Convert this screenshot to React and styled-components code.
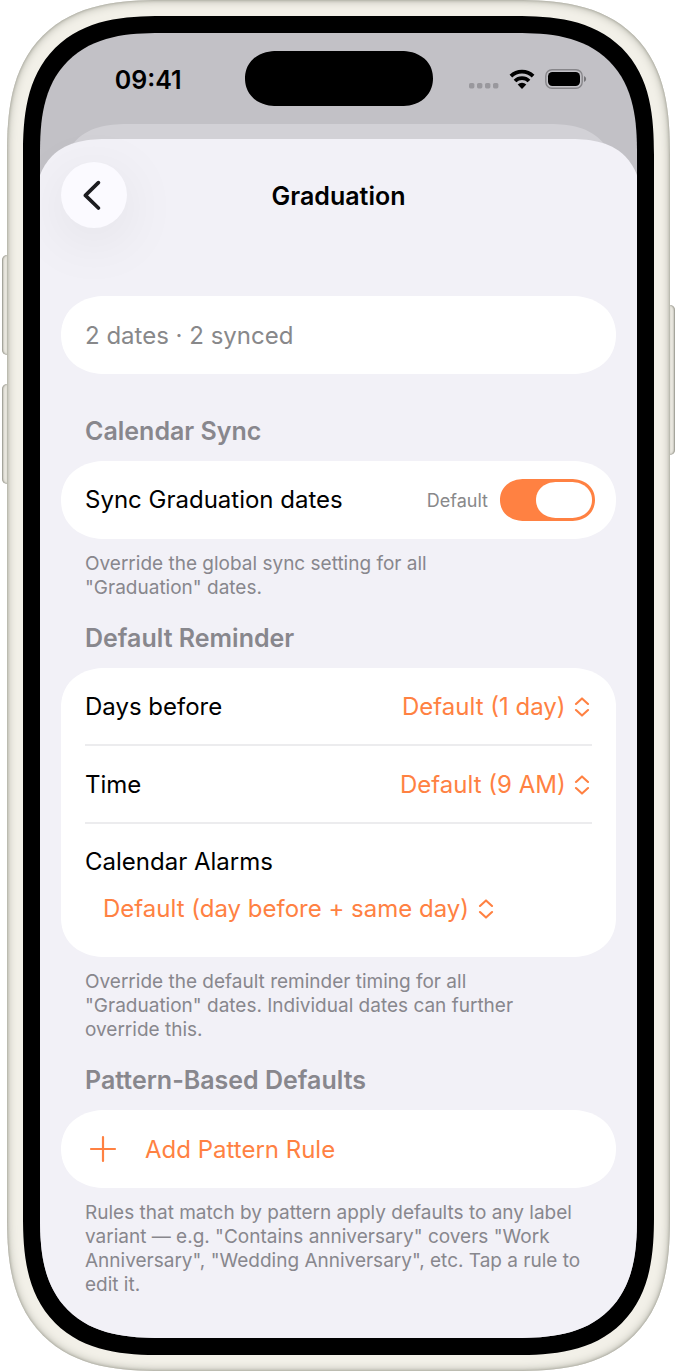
import { useState } from "react";
import styled, { createGlobalStyle } from "styled-components";

const StatusIcons = () => (
  <StatusRight>
    <svg width="30" height="20" viewBox="0 0 30 20" fill="#99989d">
      <rect x="0" y="14" width="5.4" height="5.4" rx="1.6" />
      <rect x="8" y="14" width="5.4" height="5.4" rx="1.6" />
      <rect x="16" y="14" width="5.4" height="5.4" rx="1.6" />
      <rect x="24" y="14" width="5.4" height="5.4" rx="1.6" />
    </svg>
    <svg width="26" height="20" viewBox="0 0 26 20" fill="none" stroke="#000">
      <path d="M1.9 7.2 A15.8 15.8 0 0 1 24.1 7.2" strokeWidth="3.8" />
      <path d="M6 12 A9.9 9.9 0 0 1 20 12" strokeWidth="3.8" />
      <path
        d="M13 20 L8.7 15.6 A6 6 0 0 1 17.3 15.6 Z"
        fill="#000"
        stroke="none"
      />
    </svg>
    <svg width="42" height="20" viewBox="0 0 42 20">
      <rect
        x="0.8"
        y="0.8"
        width="36.4"
        height="18.4"
        rx="6.2"
        fill="none"
        stroke="#87868a"
        strokeWidth="1.4"
      />
      <rect x="3" y="3" width="32" height="14" rx="4.4" fill="#000" />
      <path d="M39 7 Q41.2 8 41.2 10 Q41.2 12 39 13 Z" fill="#77767a" />
    </svg>
  </StatusRight>
);

const UpDown = () => (
  <svg
    width="16"
    height="20"
    viewBox="0 0 16 20"
    fill="none"
    stroke="currentColor"
    strokeWidth="2.1"
    strokeLinecap="round"
    strokeLinejoin="round"
    aria-hidden="true"
  >
    <path d="M2 7 L8 1.4 L14 7" />
    <path d="M2 13 L8 18.6 L14 13" />
  </svg>
);

const Picker = ({ id, options }) => (
  <PickerWrap>
    <Select id={id} defaultValue={options[0]}>
      {options.map((option) => (
        <option key={option}>{option}</option>
      ))}
    </Select>
    <UpDown />
  </PickerWrap>
);

const App = () => {
  const [synced, setSynced] = useState(true);

  return (
    <>
      <GlobalStyle />
      <Stage>
        <LeftButtons>
          <SideButton $side="left" />
          <SideButton $side="left" />
        </LeftButtons>
        <Frame>
          <Bezel>
            <Screen>
              <StatusBar>
                <Time>09:41</Time>
                <Island />
                <StatusIcons />
              </StatusBar>
              <BackSheet />
              <Sheet>
                <Header>
                  <BackButton aria-label="Back">
                    <svg
                      width="18"
                      height="30"
                      viewBox="0 0 18 30"
                      fill="none"
                      stroke="#1c1c20"
                      strokeWidth="3.6"
                      strokeLinecap="round"
                      strokeLinejoin="round"
                      aria-hidden="true"
                    >
                      <path d="M15.4 2.6 L2.4 15.4 L15.4 28" />
                    </svg>
                  </BackButton>
                  <Title>Graduation</Title>
                </Header>

                <Card>
                  <Row>
                    <Summary>2 dates · 2 synced</Summary>
                  </Row>
                </Card>

                <Heading $first>Calendar Sync</Heading>
                <Card>
                  <SwitchRow>
                    <Label htmlFor="sync">Sync Graduation dates</Label>
                    <SwitchSide>
                      <Hint>Default</Hint>
                      <Switch
                        id="sync"
                        type="checkbox"
                        checked={synced}
                        onChange={(e) => setSynced(e.target.checked)}
                      />
                    </SwitchSide>
                  </SwitchRow>
                </Card>
                <Footnote>
                  Override the global sync setting for all
                  <br />
                  "Graduation" dates.
                </Footnote>

                <Heading>Default Reminder</Heading>
                <Card>
                  <Row $line>
                    <Label htmlFor="days">Days before</Label>
                    <Picker id="days" options={["Default (1 day)"]} />
                  </Row>
                  <Row $line>
                    <Label htmlFor="time">Time</Label>
                    <Picker id="time" options={["Default (9 AM)"]} />
                  </Row>
                  <StackedRow>
                    <Label htmlFor="alarms">Calendar Alarms</Label>
                    <Indent>
                      <Picker
                        id="alarms"
                        options={["Default (day before + same day)"]}
                      />
                    </Indent>
                  </StackedRow>
                </Card>
                <Footnote>
                  Override the default reminder timing for all
                  <br />
                  "Graduation" dates. Individual dates can further
                  <br />
                  override this.
                </Footnote>

                <Heading>Pattern-Based Defaults</Heading>
                <Card>
                  <AddButton>
                    <svg
                      width="36"
                      height="28"
                      viewBox="0 0 36 28"
                      stroke="currentColor"
                      strokeWidth="2.2"
                      strokeLinecap="round"
                      aria-hidden="true"
                    >
                      <path d="M18 2 V26 M6 14 H30" />
                    </svg>
                    Add Pattern Rule
                  </AddButton>
                </Card>
                <Footnote>
                  Rules that match by pattern apply defaults to any label
                  <br />
                  variant — e.g. "Contains anniversary" covers "Work
                  <br />
                  Anniversary", "Wedding Anniversary", etc. Tap a rule to
                  <br />
                  edit it.
                </Footnote>
              </Sheet>
            </Screen>
          </Bezel>
        </Frame>
        <RightButtons>
          <SideButton $side="right" $tall />
        </RightButtons>
      </Stage>
    </>
  );
};
export default App;

const GlobalStyle = createGlobalStyle`
  * {
    box-sizing: border-box;
  }
  body {
    margin: 0;
    background: #fff;
    font-family: Inter, "Liberation Sans", sans-serif;
  }
  button, select, input {
    font: inherit;
    margin: 0;
  }
`;

const Stage = styled.div`
  display: flex;
  align-items: stretch;
`;

const LeftButtons = styled.div`
  width: 7px;
  padding: 255px 0 0 2px;
  display: flex;
  flex-direction: column;
  gap: 29px;
`;

const RightButtons = styled.div`
  width: 6px;
  padding: 305px 1px 0 0;
`;

const SideButton = styled.div`
  height: ${(props) => (props.$tall ? 150 : 100)}px;
  background: #e9e7df;
  border-radius: ${(props) =>
    props.$side === "left" ? "5px 0 0 5px" : "0 5px 5px 0"};
  box-shadow: inset
    ${(props) => (props.$side === "left" ? "1px" : "-1px")} 0 2px #8e8e84;
`;

const Frame = styled.div`
  flex: 1;
  min-width: 0;
  padding: 16px;
  background: #f2f0e8;
  border-radius: 155px;
  corner-shape: superellipse(1.4);
  box-shadow: inset 0 0 3px #99998e, inset 0 0 10px #a6a69b;
`;

const Bezel = styled.div`
  padding: 17px;
  background: #000;
  border-radius: 139px;
  corner-shape: superellipse(1.4);
`;

const Screen = styled.div`
  background: #c2c1c6;
  border-radius: 121px;
  corner-shape: superellipse(1.4);
  overflow: hidden;
`;

const StatusBar = styled.div`
  display: grid;
  grid-template-columns: 1fr 188px 1fr;
  align-items: center;
  padding: 18px 0;
`;

const Time = styled.div`
  padding: 2px 0 0 12px;
  text-align: center;
  font-size: 25px;
  font-weight: 600;
  line-height: 32px;
`;

const Island = styled.div`
  height: 55px;
  border-radius: 32px / 28px;
  corner-shape: superellipse(1.1);
  background: #000;
`;

const StatusRight = styled.div`
  display: flex;
  align-items: center;
  gap: 10px;
  padding-left: 36px;
`;

const BackSheet = styled.div`
  height: 80px;
  margin: 0 20px -65px;
  border-radius: 70px 70px 0 0;
  corner-shape: superellipse(1.4);
  background: #d2d1d6;
`;

/* a little wider than the screen, so its corners are cut by the edge */
const Sheet = styled.main`
  position: relative;
  margin: 0 -5px;
  padding: 23px 26px 41px;
  background: #f2f1f7;
  border-radius: 74px 74px 0 0;
  corner-shape: superellipse(1.4);
`;

const Header = styled.header`
  display: grid;
  grid-template-columns: 66px 1fr 66px;
  align-items: center;
  margin-bottom: 68px;
`;

const BackButton = styled.button`
  display: flex;
  align-items: center;
  justify-content: center;
  width: 66px;
  height: 66px;
  padding: 0 4px 0 0;
  border: none;
  border-radius: 50%;
  background: #fbfaff;
  box-shadow: 0 12px 60px rgba(0, 0, 0, 0.08);
`;

const Title = styled.h1`
  margin: 0;
  padding-top: 2px;
  text-align: center;
  font-size: 25px;
  font-weight: 600;
  line-height: 32px;
`;

const Card = styled.section`
  padding: 0 24px;
  background: #fff;
  border-radius: 44px / 39px;
  corner-shape: superellipse(1.1);
`;

const Row = styled.div`
  display: flex;
  align-items: center;
  justify-content: space-between;
  height: 78px;
  padding-top: 2px;
  border-bottom: ${(props) => (props.$line ? "2px solid #ececee" : "none")};
`;

const SwitchRow = styled(Row)`
  margin-right: -3px;
  padding-top: 0;
`;

const StackedRow = styled.div`
  display: flex;
  flex-direction: column;
  gap: 15px;
  padding: 22px 0 32px;
`;

const Label = styled.label`
  font-size: 24px;
  line-height: 32px;
`;

const Summary = styled.p`
  margin: 0;
  color: #88888a;
  font-size: 24px;
  line-height: 32px;
`;

const Heading = styled.h2`
  margin: ${(props) => (props.$first ? 41 : 22)}px 24px 14px;
  color: #88878d;
  font-size: 25px;
  font-weight: 600;
  line-height: 32px;
`;

const Footnote = styled.p`
  margin: 13px 24px 0;
  color: #88878d;
  font-size: 19px;
  line-height: 24px;
`;

const SwitchSide = styled.div`
  display: flex;
  align-items: center;
  gap: 12px;
`;

const Hint = styled.span`
  color: #88888a;
  font-size: 18px;
`;

const Switch = styled.input`
  appearance: none;
  display: flex;
  width: 95px;
  height: 42px;
  padding: 3px;
  border-radius: 24px / 21px;
  corner-shape: superellipse(1.1);
  background: #d5d5d9;

  &::before {
    content: "";
    width: 56px;
    height: 36px;
    border-radius: 21px / 18px;
    corner-shape: superellipse(1.1);
    background: #fff;
  }

  &:checked {
    justify-content: flex-end;
    background: #ff8142;
  }
`;

const PickerWrap = styled.span`
  display: flex;
  align-items: center;
  gap: 8px;
  color: #ff8142;
  padding-right: 2px;
`;

const Indent = styled.div`
  padding-left: 18px;
`;

const Select = styled.select`
  appearance: none;
  padding: 0;
  border: none;
  background: none;
  color: inherit;
  font-size: 24px;
  line-height: 32px;
`;

const AddButton = styled.button`
  display: flex;
  align-items: center;
  gap: 24px;
  width: 100%;
  height: 78px;
  padding: 0;
  border: none;
  background: none;
  color: #ff8142;
  font-size: 24px;
`;
